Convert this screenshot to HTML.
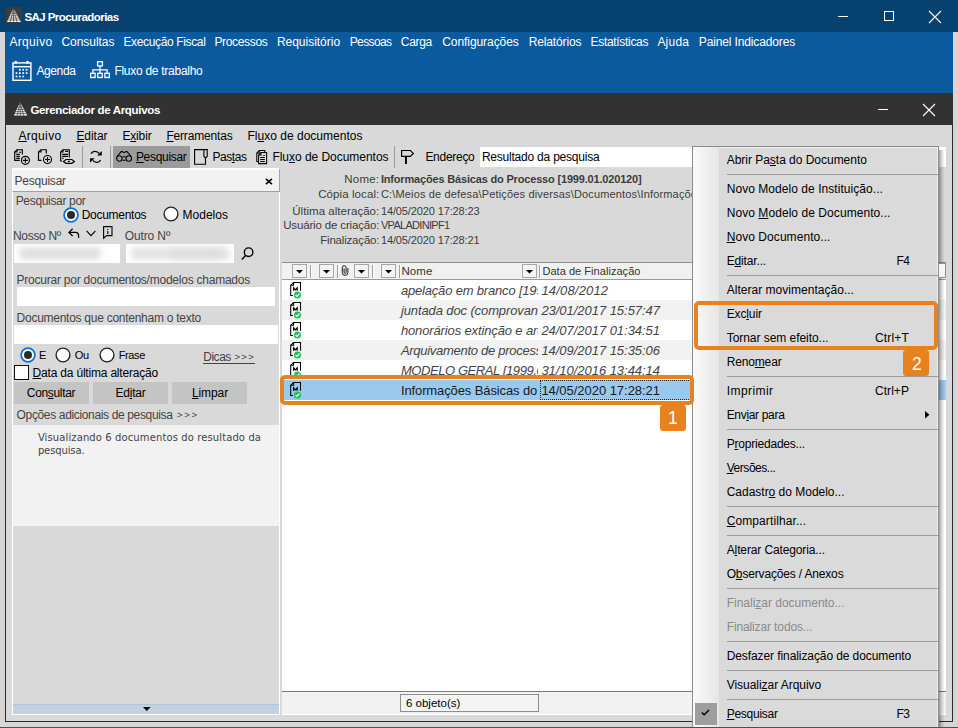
<!DOCTYPE html>
<html lang="pt-BR"><head><meta charset="utf-8"><title>SAJ Procuradorias</title>
<style>
html,body{margin:0;padding:0;}
body{width:958px;height:728px;overflow:hidden;position:relative;background:#d9d9d9;font-family:"Liberation Sans",sans-serif;}
.b{position:absolute;box-sizing:border-box;}
.t{position:absolute;white-space:nowrap;font-family:"Liberation Sans",sans-serif;}
svg{position:absolute;overflow:visible;}
u{text-decoration:underline;text-underline-offset:1px;text-decoration-thickness:1px;}
</style></head>
<body>
<div class="b" style="left:0px;top:0px;width:958px;height:32px;background:#07416f;"></div>
<div class="b" style="left:0px;top:32px;width:5px;height:696px;background:#d6d6d6;"></div>
<div class="b" style="left:953px;top:32px;width:5px;height:696px;background:#d6d6d6;"></div>
<div class="b" style="left:5px;top:32px;width:948px;height:61px;background:#0b5a9e;"></div>
<svg style="left:6px;top:7px" width="16" height="16" viewBox="0 0 16 16"><rect x="0" y="0" width="16" height="16" fill="#3c3c3c"/><path d="M7.3 1.2 L14.8 14.9 L1 14.9 Z" fill="#fff"/><path d="M4.4 8.8 L11.4 8.8 M3.2 11 L12.6 11 M2.1 13 L13.7 13 M5.6 6.4 L10 6.4 M7.3 1.2 L7.6 14.9 M7.3 1.2 L4.4 14.9 M7.3 1.2 L11 14.9" stroke="#444" stroke-width="0.75" fill="none"/></svg>
<span class="t" style="top:10.00px;font-size:11.5px;line-height:15px;color:#fff;font-weight:bold;left:24.40px;letter-spacing:-0.556px;">SAJ Procuradorias</span>
<svg style="left:830px;top:0px" width="128" height="32" viewBox="0 0 128 32"><path d="M8 16.5 H18" stroke="#fff" stroke-width="1"/><rect x="54.5" y="11.5" width="9" height="9" fill="none" stroke="#fff" stroke-width="1"/><path d="M99 11 L111 23 M111 11 L99 23" stroke="#fff" stroke-width="1.1"/></svg>
<span class="t" style="top:35.00px;font-size:12px;line-height:15px;color:#fff;left:9.40px;letter-spacing:0.345px;">Arquivo</span>
<span class="t" style="top:35.00px;font-size:12px;line-height:15px;color:#fff;left:61.40px;letter-spacing:-0.031px;">Consultas</span>
<span class="t" style="top:35.00px;font-size:12px;line-height:15px;color:#fff;left:123.40px;letter-spacing:-0.352px;">Execução Fiscal</span>
<span class="t" style="top:35.00px;font-size:12px;line-height:15px;color:#fff;left:214.40px;letter-spacing:-0.326px;">Processos</span>
<span class="t" style="top:35.00px;font-size:12px;line-height:15px;color:#fff;left:276.90px;letter-spacing:-0.015px;">Requisitório</span>
<span class="t" style="top:35.00px;font-size:12px;line-height:15px;color:#fff;left:349.70px;letter-spacing:-0.604px;">Pessoas</span>
<span class="t" style="top:35.00px;font-size:12px;line-height:15px;color:#fff;left:400.80px;letter-spacing:-0.297px;">Carga</span>
<span class="t" style="top:35.00px;font-size:12px;line-height:15px;color:#fff;left:442.20px;letter-spacing:-0.061px;">Configurações</span>
<span class="t" style="top:35.00px;font-size:12px;line-height:15px;color:#fff;left:528.80px;letter-spacing:-0.153px;">Relatórios</span>
<span class="t" style="top:35.00px;font-size:12px;line-height:15px;color:#fff;left:590.60px;letter-spacing:-0.322px;">Estatísticas</span>
<span class="t" style="top:35.00px;font-size:12px;line-height:15px;color:#fff;left:657.40px;letter-spacing:0.219px;">Ajuda</span>
<span class="t" style="top:35.00px;font-size:12px;line-height:15px;color:#fff;left:698.80px;letter-spacing:-0.135px;">Painel Indicadores</span>
<svg style="left:12px;top:60px" width="20" height="22" viewBox="0 0 20 22"><rect x="1" y="2.9" width="17.9" height="17.4" fill="none" stroke="#fff" stroke-width="1.4"/><path d="M1 6.7 H18.9" stroke="#fff" stroke-width="1.5"/><circle cx="3.8" cy="2.2" r="1.5" fill="#fff"/><circle cx="15.5" cy="2.2" r="1.5" fill="#fff"/><g fill="#fff"><rect x="6.95" y="8.95" width="1.7" height="1.7"/><rect x="10.35" y="8.95" width="1.7" height="1.7"/><rect x="13.75" y="8.95" width="1.7" height="1.7"/><rect x="3.65" y="12.25" width="1.7" height="1.7"/><rect x="6.95" y="12.25" width="1.7" height="1.7"/><rect x="10.35" y="12.25" width="1.7" height="1.7"/><rect x="13.75" y="12.25" width="1.7" height="1.7"/><rect x="3.65" y="15.65" width="1.7" height="1.7"/><rect x="6.95" y="15.65" width="1.7" height="1.7"/><rect x="10.35" y="15.65" width="1.7" height="1.7"/></g></svg>
<span class="t" style="top:64.00px;font-size:12px;line-height:15px;color:#fff;left:36.40px;letter-spacing:-0.379px;">Agenda</span>
<svg style="left:90px;top:61px" width="20" height="18" viewBox="0 0 20 18"><g fill="none" stroke="#fff" stroke-width="1.3"><rect x="7.6" y="0.7" width="4.8" height="4.2"/><rect x="0.7" y="12.3" width="4.4" height="4.2"/><rect x="7.8" y="12.3" width="4.4" height="4.2"/><rect x="14.9" y="12.3" width="4.4" height="4.2"/><path d="M10 5 V12.3 M2.9 12.3 V8.8 H17.1 V12.3"/></g></svg>
<span class="t" style="top:64.00px;font-size:12px;line-height:15px;color:#fff;left:114.40px;letter-spacing:-0.273px;">Fluxo de trabalho</span>
<div class="b" style="left:5px;top:93px;width:948px;height:32px;background:#323232;"></div>
<div class="b" style="left:5px;top:125px;width:1px;height:597px;background:#2b2b2b;"></div>
<div class="b" style="left:952px;top:125px;width:1px;height:597px;background:#2b2b2b;"></div>
<div class="b" style="left:5px;top:721px;width:948px;height:1px;background:#2b2b2b;"></div>
<div class="b" style="left:5px;top:722px;width:948px;height:5px;background:#d6d6d6;"></div>
<svg style="left:12.6px;top:100.6px" width="15.5" height="15.5" viewBox="0 0 16 16"><path d="M7.3 1.2 L14.8 14.9 L1 14.9 Z" fill="#fff"/><path d="M4.4 8.8 L11.4 8.8 M3.2 11 L12.6 11 M2.1 13 L13.7 13 M5.6 6.4 L10 6.4 M7.3 1.2 L7.6 14.9 M7.3 1.2 L4.4 14.9 M7.3 1.2 L11 14.9" stroke="#3a3a3a" stroke-width="0.75" fill="none"/></svg>
<span class="t" style="top:103.00px;font-size:11.5px;line-height:15px;color:#fff;font-weight:bold;left:30.40px;letter-spacing:-0.321px;">Gerenciador de Arquivos</span>
<svg style="left:870px;top:93px" width="80" height="32" viewBox="0 0 80 32"><path d="M8 16.5 H18" stroke="#fff" stroke-width="1"/><path d="M53 11 L65 23 M65 11 L53 23" stroke="#fff" stroke-width="1.1"/></svg>
<span class="t" style="top:129.00px;font-size:12px;line-height:15px;color:#000;left:18.40px;letter-spacing:0.342px;"><u>A</u>rquivo</span>
<span class="t" style="top:129.00px;font-size:12px;line-height:15px;color:#000;left:76.40px;letter-spacing:-0.043px;"><u>E</u>ditar</span>
<span class="t" style="top:129.00px;font-size:12px;line-height:15px;color:#000;left:122.40px;letter-spacing:-0.155px;">E<u>x</u>ibir</span>
<span class="t" style="top:129.00px;font-size:12px;line-height:15px;color:#000;left:166.40px;letter-spacing:-0.177px;"><u>F</u>erramentas</span>
<span class="t" style="top:129.00px;font-size:12px;line-height:15px;color:#000;left:247.40px;letter-spacing:0.018px;">Fl<u>u</u>xo de documentos</span>
<div class="b" style="left:113px;top:146px;width:77px;height:22px;background:#9b9b9b;"></div>
<div class="b" style="left:82px;top:146px;width:1px;height:22px;background:#9c9c9c;"></div>
<div class="b" style="left:110px;top:146px;width:1px;height:22px;background:#9c9c9c;"></div>
<div class="b" style="left:394px;top:146px;width:1px;height:22px;background:#9c9c9c;"></div>
<span class="t" style="top:150.00px;font-size:12px;line-height:15px;color:#000;left:135.90px;letter-spacing:-0.308px;"><u>P</u>esquisar</span>
<span class="t" style="top:150.00px;font-size:12px;line-height:15px;color:#000;left:212.40px;letter-spacing:-0.436px;">Pas<u>t</u>as</span>
<span class="t" style="top:150.00px;font-size:12px;line-height:15px;color:#000;left:272.40px;letter-spacing:-0.033px;">Flu<u>x</u>o de Documentos</span>
<span class="t" style="top:150.00px;font-size:12px;line-height:15px;color:#000;left:425.40px;letter-spacing:-0.284px;">Endereço</span>
<div class="b" style="left:480px;top:147px;width:466px;height:20px;background:#fff;"></div>
<span class="t" style="top:150.00px;font-size:12px;line-height:15px;color:#000;left:481.90px;letter-spacing:-0.214px;">Resultado da pesquisa</span>
<svg style="left:13px;top:148px" width="18" height="18" viewBox="0 0 18 18"><g fill="none" stroke="#000" stroke-width="1.15"><path d="M6.8 12.3 H1.7 V4 L4 1.7 H9.3 V6.5"/><path d="M4 1.7 V4 H1.7"/><path d="M6.3 4.4 H7.8 M3.3 6.3 H6.8 M3.3 8.4 H6.8 M3.3 10.3 H6.8"/><circle cx="12.4" cy="12.3" r="4"/><path d="M9.9 12.3 H14.9 M12.4 9.8 V14.8"/></g></svg>
<svg style="left:37px;top:148px" width="18" height="18" viewBox="0 0 18 18"><g fill="none" stroke="#000" stroke-width="1.15"><path d="M4.5 12.3 H1.5 V4 L4 1.7 H9.3 V5.5"/><path d="M4 1.7 V4 H1.5"/><circle cx="10.5" cy="11.5" r="4"/><path d="M8 11.5 H13 M10.5 9 V14"/></g></svg>
<svg style="left:59px;top:148px" width="18" height="18" viewBox="0 0 18 18"><g fill="none" stroke="#000" stroke-width="1.15"><path d="M3 13 H1.7 V4 L4 1.7 H10.3 V9.5"/><path d="M4 1.7 V4 H1.7"/><path d="M6.2 3.4 H9 M3.3 6.4 H9 M3.3 8.4 H9 M3.2 10.4 H4.5"/><path d="M4.4 13.4 L7 11.5 H12.8 L15.4 13.4 L12.8 15.3 H7 Z"/><path d="M9 13.4 H10.8" stroke-width="1.4"/></g></svg>
<svg style="left:89px;top:149px" width="14" height="15" viewBox="0 0 14 15"><g fill="none" stroke="#000" stroke-width="1.25"><path d="M2 4.8 C3.6 1.4 8.2 1.4 10.6 4.8"/><path d="M11.6 11 C10 14 6 14 3.8 11.4"/></g><path d="M12.8 2 V6.6 H8.2 Z" fill="#000"/><path d="M1 9.2 H5.7 L1 13.6 Z" fill="#000"/></svg>
<svg style="left:116px;top:150px" width="17" height="13" viewBox="0 0 17 13"><g fill="none" stroke="#000" stroke-width="1.1"><circle cx="3.4" cy="8.5" r="2.75"/><circle cx="12.8" cy="8.5" r="2.75"/><path d="M1.4 6 L5.2 1.6 H6.3 L8.1 2.7 L9.9 1.6 H11 L14.8 6"/><path d="M6.6 6.7 H9.6 M6.6 10.3 H9.6"/></g></svg>
<svg style="left:194px;top:149px" width="15" height="17" viewBox="0 0 15 17"><g fill="none" stroke="#000" stroke-width="1.1"><path d="M9.9 0.6 H0.6 V15.3 H11.5 V9"/><path d="M9.9 0.6 H13.2 V7.4 L11.5 9 L9.9 7.4 Z"/></g></svg>
<svg style="left:256px;top:150px" width="12" height="15" viewBox="0 0 12 15"><g fill="none" stroke="#000" stroke-width="1.05"><path d="M2.6 11.5 H0.8 V3 L3.2 0.5 H8.8 V2.4"/><path d="M3.2 0.8 V3 H1"/><path d="M2.6 13.6 V5 L5 2.4 H10.6 V13.6 Z"/><path d="M5 2.6 V5 H2.8"/><path d="M7.3 5.5 H8.8 M4.2 7.5 H8.8 M4.2 9.5 H8.8 M4.2 11.4 H8.8"/></g></svg>
<svg style="left:400px;top:149px" width="15" height="16" viewBox="0 0 15 16"><g fill="none" stroke="#000" stroke-width="1.15"><path d="M1.6 1.5 H10.3 L13.4 4.4 L10.3 7.4 H1.6 Z"/></g><rect x="5" y="7.4" width="1.9" height="7.6" fill="#000"/></svg>
<div class="b" style="left:12px;top:168px;width:268px;height:24px;background:#f2f2f2;border-top:2px solid #fff;border-left:1px solid #fff;border-right:1px solid #a2a2a2;border-bottom:1px solid #a2a2a2;"></div>
<div class="b" style="left:12px;top:192px;width:1px;height:523px;background:#fff;"></div>
<div class="b" style="left:279px;top:192px;width:1px;height:523px;background:#fff;"></div>
<div class="b" style="left:12px;top:714px;width:268px;height:1px;background:#fff;"></div>
<span class="t" style="top:174.00px;font-size:12px;line-height:15px;color:#444;left:14.40px;letter-spacing:-0.208px;">Pesquisar</span>
<svg style="left:264.5px;top:177.5px" width="8" height="7" viewBox="0 0 8 7"><path d="M0.9 0.8 L6.9 6.2 M6.9 0.8 L0.9 6.2" stroke="#111" stroke-width="1.8"/></svg>
<span class="t" style="top:194.00px;font-size:12px;line-height:15px;color:#444;left:15.70px;letter-spacing:-0.327px;">Pesquisar por</span>
<svg style="left:62.5px;top:206.7px" width="16" height="16"><circle cx="8" cy="8" r="6.9" fill="#fff" stroke="#0a72d1" stroke-width="1.7"/><circle cx="8" cy="8" r="4" fill="#2a2a2a"/></svg>
<span class="t" style="top:208.00px;font-size:12px;line-height:15px;color:#000;left:81.70px;letter-spacing:-0.277px;">Documentos</span>
<svg style="left:163.3px;top:206.4px" width="16" height="16"><circle cx="8" cy="8" r="6.9" fill="#fff" stroke="#222" stroke-width="1.4"/></svg>
<span class="t" style="top:208.00px;font-size:12px;line-height:15px;color:#000;left:182.40px;letter-spacing:0.049px;">Modelos</span>
<span class="t" style="top:229.00px;font-size:12px;line-height:15px;color:#444;left:13.00px;letter-spacing:-0.313px;">Nosso Nº</span>
<span class="t" style="top:229.00px;font-size:12px;line-height:15px;color:#444;left:124.70px;letter-spacing:-0.113px;">Outro Nº</span>
<svg style="left:67.5px;top:228px" width="12" height="11" viewBox="0 0 12 11"><g fill="none" stroke="#000" stroke-width="1.2"><path d="M4.6 0.8 L0.9 4.4 L4.6 8"/><path d="M1 4.4 H7.4 C9.6 4.4 10.6 6 10.6 8 V10"/></g></svg>
<svg style="left:85.5px;top:230px" width="10" height="7" viewBox="0 0 10 7"><path d="M0.6 0.8 L5 5.6 L9.4 0.8" fill="none" stroke="#000" stroke-width="1.1"/></svg>
<svg style="left:102.5px;top:226px" width="10" height="13" viewBox="0 0 10 13"><g fill="none" stroke="#000" stroke-width="1.1"><path d="M0.6 0.6 H9 V9.6 H3.6 L0.6 12.2 Z"/><path d="M4.8 3 V3.9 M4.8 5 V8"/></g></svg>
<div class="b" style="left:14px;top:244px;width:106px;height:19px;background:#fff;"></div>
<div class="b" style="left:126px;top:244px;width:108px;height:19px;background:#fff;"></div>
<div class="b" style="left:19px;top:247px;width:82px;height:13px;background:#e0e0e0;filter:blur(3px);border-radius:5px;"></div>
<div class="b" style="left:131px;top:247px;width:99px;height:13px;background:#e4e4e4;filter:blur(3px);border-radius:5px;"></div><div class="b" style="left:170px;top:250px;width:52px;height:7px;background:#dcdcdc;filter:blur(3px);border-radius:4px;"></div>
<svg style="left:241.3px;top:247.3px" width="13" height="13" viewBox="0 0 13 13"><g fill="none" stroke="#000" stroke-width="1.4"><circle cx="7.6" cy="5.2" r="4.3"/><path d="M4.6 8.4 L0.8 12.4"/></g></svg>
<span class="t" style="top:273.00px;font-size:12px;line-height:15px;color:#444;left:16.60px;letter-spacing:-0.235px;">Procurar por documentos/modelos chamados</span>
<div class="b" style="left:17px;top:287px;width:258px;height:19px;background:#fff;"></div>
<span class="t" style="top:311.00px;font-size:12px;line-height:15px;color:#444;left:16.60px;letter-spacing:-0.266px;">Documentos que contenham o texto</span>
<div class="b" style="left:14px;top:325px;width:264px;height:19px;background:#fff;"></div>
<svg style="left:19.5px;top:346.5px" width="16" height="16"><circle cx="8" cy="8" r="6.9" fill="#fff" stroke="#0a72d1" stroke-width="1.7"/><circle cx="8" cy="8" r="4" fill="#2a2a2a"/></svg>
<span class="t" style="top:348.00px;font-size:11px;line-height:14px;color:#000;left:39.10px;letter-spacing:-1.744px;">E</span>
<svg style="left:55.4px;top:346.5px" width="16" height="16"><circle cx="8" cy="8" r="6.9" fill="#fff" stroke="#222" stroke-width="1.4"/></svg>
<span class="t" style="top:348.00px;font-size:11px;line-height:14px;color:#000;left:74.80px;letter-spacing:-0.244px;">Ou</span>
<svg style="left:99.3px;top:346.5px" width="16" height="16"><circle cx="8" cy="8" r="6.9" fill="#fff" stroke="#222" stroke-width="1.4"/></svg>
<span class="t" style="top:348.00px;font-size:11px;line-height:14px;color:#000;left:118.70px;letter-spacing:-0.385px;">Frase</span>
<span class="t" style="top:350.00px;font-size:12px;line-height:15px;color:#444;left:203.20px;letter-spacing:-0.463px;">Dicas</span>
<span class="t" style="top:350.00px;font-size:9.5px;line-height:13px;color:#444;left:234.40px;letter-spacing:1.415px;">&gt;&gt;&gt;</span>
<div class="b" style="left:203px;top:363px;width:52px;height:1px;background:#444;"></div>
<div class="b" style="left:14px;top:365px;width:15px;height:15px;background:#fff;border:1px solid #111;"></div>
<span class="t" style="top:366.00px;font-size:12px;line-height:15px;color:#000;left:32.60px;letter-spacing:-0.195px;"><u>D</u>ata da última alteração</span>
<div class="b" style="left:14px;top:382px;width:75px;height:22px;background:#c4c4c4;"></div>
<div class="b" style="left:93px;top:382px;width:75px;height:22px;background:#c4c4c4;"></div>
<div class="b" style="left:172px;top:382px;width:75px;height:22px;background:#c4c4c4;"></div>
<span class="t" style="top:386.00px;font-size:12px;line-height:15px;color:#000;left:26.80px;letter-spacing:-0.329px;">Con<u>s</u>ultar</span>
<span class="t" style="top:386.00px;font-size:12px;line-height:15px;color:#000;left:115.40px;letter-spacing:-0.212px;">Ed<u>i</u>tar</span>
<span class="t" style="top:386.00px;font-size:12px;line-height:15px;color:#000;left:191.90px;letter-spacing:-0.084px;"><u>L</u>impar</span>
<span class="t" style="top:408.00px;font-size:12px;line-height:15px;color:#444;left:16.60px;letter-spacing:-0.352px;">Opções adicionais de pesquisa</span>
<span class="t" style="top:408.00px;font-size:9.5px;line-height:13px;color:#444;left:176.90px;letter-spacing:1.781px;">&gt;&gt;&gt;</span>
<div class="b" style="left:13px;top:425px;width:266px;height:101px;background:#f2f2f2;"></div>
<span class="t" style="top:431.00px;font-size:10px;line-height:13px;color:#444;font-family:'DejaVu Sans','Liberation Sans',sans-serif;left:37.90px;letter-spacing:0.110px;">Visualizando 6 documentos do resultado da</span>
<span class="t" style="top:444.00px;font-size:10px;line-height:13px;color:#444;font-family:'DejaVu Sans','Liberation Sans',sans-serif;left:37.90px;letter-spacing:-0.123px;">pesquisa.</span>
<div class="b" style="left:13px;top:704px;width:266px;height:10px;background:#c3d0dd;border-top:1px solid #a9c6e2;"></div>
<svg style="left:142.5px;top:707px" width="8" height="4" viewBox="0 0 8 4"><path d="M0 0 H7.6 L3.8 4 Z" fill="#000"/></svg>
<span class="t" style="top:172.00px;font-size:11.5px;line-height:15px;color:#3c3c3c;right:578.70px;letter-spacing:0.245px;">Nome:</span>
<span class="t" style="top:172.00px;font-size:11px;line-height:14px;color:#3c3c3c;font-weight:bold;left:380.90px;letter-spacing:-0.176px;">Informações Básicas do Processo [1999.01.020120]</span>
<span class="t" style="top:187.00px;font-size:11.5px;line-height:15px;color:#3c3c3c;right:578.70px;letter-spacing:0.084px;">Cópia local:</span>
<div class="b" style="left:380px;top:186px;width:312px;height:16px;overflow:hidden;">
<span class="t" style="top:1.00px;font-size:11px;line-height:14px;color:#3c3c3c;left:0.90px;letter-spacing:0.160px;">C:\Meios de defesa\Petições diversas\Documentos\Informações Básicas do Processo</span>
</div>
<span class="t" style="top:204.00px;font-size:11.5px;line-height:15px;color:#3c3c3c;right:578.70px;letter-spacing:0.047px;">Última alteração:</span>
<span class="t" style="top:204.00px;font-size:11px;line-height:14px;color:#3c3c3c;left:380.90px;letter-spacing:-0.123px;">14/05/2020 17:28:23</span>
<span class="t" style="top:218.00px;font-size:11.5px;line-height:15px;color:#3c3c3c;right:578.70px;letter-spacing:-0.157px;">Usuário de criação:</span>
<span class="t" style="top:218.00px;font-size:11px;line-height:14px;color:#3c3c3c;left:380.90px;letter-spacing:-0.686px;">VPALADINIPF1</span>
<span class="t" style="top:233.00px;font-size:11.5px;line-height:15px;color:#3c3c3c;right:578.70px;letter-spacing:-0.190px;">Finalização:</span>
<span class="t" style="top:233.00px;font-size:11px;line-height:14px;color:#3c3c3c;left:380.90px;letter-spacing:-0.123px;">14/05/2020 17:28:21</span>
<div class="b" style="left:282px;top:262px;width:664px;height:453px;background:#fff;"></div>
<div class="b" style="left:282px;top:262px;width:664px;height:18px;background:#f1f1f1;border-bottom:1px solid #9a9a9a;"></div>
<div class="b" style="left:282px;top:262px;width:664px;height:1px;background:#8f8f8f;"></div>
<div class="b" style="left:292px;top:264px;width:15px;height:14px;background:#f4f4f4;border:1px solid #a6a6a6;"></div>
<svg style="left:296px;top:269.5px" width="7" height="4" viewBox="0 0 7 4"><path d="M0 0 H7 L3.5 3.6 Z" fill="#000"/></svg>
<div class="b" style="left:319px;top:264px;width:15px;height:14px;background:#f4f4f4;border:1px solid #a6a6a6;"></div>
<svg style="left:323px;top:269.5px" width="7" height="4" viewBox="0 0 7 4"><path d="M0 0 H7 L3.5 3.6 Z" fill="#000"/></svg>
<div class="b" style="left:354px;top:264px;width:15px;height:14px;background:#f4f4f4;border:1px solid #a6a6a6;"></div>
<svg style="left:358px;top:269.5px" width="7" height="4" viewBox="0 0 7 4"><path d="M0 0 H7 L3.5 3.6 Z" fill="#000"/></svg>
<div class="b" style="left:381px;top:264px;width:15px;height:14px;background:#f4f4f4;border:1px solid #a6a6a6;"></div>
<svg style="left:385px;top:269.5px" width="7" height="4" viewBox="0 0 7 4"><path d="M0 0 H7 L3.5 3.6 Z" fill="#000"/></svg>
<div class="b" style="left:522px;top:264px;width:15px;height:14px;background:#f4f4f4;border:1px solid #a6a6a6;"></div>
<svg style="left:526px;top:269.5px" width="7" height="4" viewBox="0 0 7 4"><path d="M0 0 H7 L3.5 3.6 Z" fill="#000"/></svg>
<div class="b" style="left:309.5px;top:265px;width:1px;height:13px;background:#a0a0a0;"></div>
<div class="b" style="left:310.5px;top:265px;width:1px;height:13px;background:#fff;"></div>
<div class="b" style="left:336.5px;top:265px;width:1px;height:13px;background:#a0a0a0;"></div>
<div class="b" style="left:337.5px;top:265px;width:1px;height:13px;background:#fff;"></div>
<div class="b" style="left:371.5px;top:265px;width:1px;height:13px;background:#a0a0a0;"></div>
<div class="b" style="left:372.5px;top:265px;width:1px;height:13px;background:#fff;"></div>
<div class="b" style="left:398.5px;top:265px;width:1px;height:13px;background:#a0a0a0;"></div>
<div class="b" style="left:399.5px;top:265px;width:1px;height:13px;background:#fff;"></div>
<div class="b" style="left:539px;top:265px;width:1px;height:13px;background:#a0a0a0;"></div>
<div class="b" style="left:540px;top:265px;width:1px;height:13px;background:#fff;"></div>
<svg style="left:341px;top:265px" width="9" height="12" viewBox="0 0 9 12"><path d="M6.9 3 V7.6 A2.8 2.8 0 0 1 1.3 7.6 V2.6 A1.9 1.9 0 0 1 5.1 2.6 V7.4 A1 1 0 0 1 3.1 7.4 V3.4" fill="none" stroke="#111" stroke-width="0.95"/></svg>
<span class="t" style="top:264.00px;font-size:11.5px;line-height:15px;color:#333;left:401.40px;letter-spacing:0.103px;">Nome</span>
<span class="t" style="top:264.00px;font-size:11px;line-height:14px;color:#333;left:542.40px;letter-spacing:0.046px;">Data de Finalização</span>
<svg style="left:289px;top:281px" width="13" height="19" viewBox="0 0 13 19"><path d="M3.9 14.5 H1.7 V4.3 L4.6 1.4 H11.5 V9.7" fill="none" stroke="#000" stroke-width="1.05"/><path d="M4.6 1.4 V4.3 H1.7" fill="none" stroke="#000" stroke-width="1.05"/><path d="M4.6 9.7 V6.8 L6.4 8.8 L8.2 6.8 V9.7" fill="none" stroke="#000" stroke-width="1.25"/><circle cx="8.5" cy="14" r="3.55" fill="#1fc05c"/><path d="M6.6 13.9 L8 15.3 L10.5 12.6" fill="none" stroke="#fff" stroke-width="1.2"/></svg>
<div class="b" style="left:396px;top:280px;width:142px;height:20px;overflow:hidden;">
<span class="t" style="top:2.00px;font-size:13px;line-height:17px;color:#444;font-style:italic;left:4.90px;letter-spacing:-0.180px;">apelação em branco [1999.01.020120]</span>
</div>
<span class="t" style="top:282.00px;font-size:13px;line-height:17px;color:#444;font-style:italic;left:541.40px;letter-spacing:0.182px;">14/08/2012</span>
<div class="b" style="left:282px;top:300px;width:664px;height:20px;background:#f2f2f2;"></div>
<svg style="left:289px;top:301px" width="13" height="19" viewBox="0 0 13 19"><path d="M3.9 14.5 H1.7 V4.3 L4.6 1.4 H11.5 V9.7" fill="none" stroke="#000" stroke-width="1.05"/><path d="M4.6 1.4 V4.3 H1.7" fill="none" stroke="#000" stroke-width="1.05"/><path d="M4.6 9.7 V6.8 L6.4 8.8 L8.2 6.8 V9.7" fill="none" stroke="#000" stroke-width="1.25"/><circle cx="8.5" cy="14" r="3.55" fill="#1fc05c"/><path d="M6.6 13.9 L8 15.3 L10.5 12.6" fill="none" stroke="#fff" stroke-width="1.2"/></svg>
<div class="b" style="left:396px;top:300px;width:142px;height:20px;overflow:hidden;">
<span class="t" style="top:2.00px;font-size:13px;line-height:17px;color:#444;font-style:italic;left:4.90px;letter-spacing:-0.110px;">juntada doc (comprovante)</span>
</div>
<span class="t" style="top:302.00px;font-size:13px;line-height:17px;color:#444;font-style:italic;left:541.40px;letter-spacing:-0.036px;">23/01/2017 15:57:47</span>
<svg style="left:289px;top:321px" width="13" height="19" viewBox="0 0 13 19"><path d="M3.9 14.5 H1.7 V4.3 L4.6 1.4 H11.5 V9.7" fill="none" stroke="#000" stroke-width="1.05"/><path d="M4.6 1.4 V4.3 H1.7" fill="none" stroke="#000" stroke-width="1.05"/><path d="M4.6 9.7 V6.8 L6.4 8.8 L8.2 6.8 V9.7" fill="none" stroke="#000" stroke-width="1.25"/><circle cx="8.5" cy="14" r="3.55" fill="#1fc05c"/><path d="M6.6 13.9 L8 15.3 L10.5 12.6" fill="none" stroke="#fff" stroke-width="1.2"/></svg>
<div class="b" style="left:396px;top:320px;width:142px;height:20px;overflow:hidden;">
<span class="t" style="top:2.00px;font-size:13px;line-height:17px;color:#444;font-style:italic;left:4.90px;letter-spacing:-0.130px;">honorários extinção e arquivamento</span>
</div>
<span class="t" style="top:322.00px;font-size:13px;line-height:17px;color:#444;font-style:italic;left:541.40px;letter-spacing:-0.036px;">24/07/2017 01:34:51</span>
<div class="b" style="left:282px;top:340px;width:664px;height:20px;background:#f2f2f2;"></div>
<svg style="left:289px;top:341px" width="13" height="19" viewBox="0 0 13 19"><path d="M3.9 14.5 H1.7 V4.3 L4.6 1.4 H11.5 V9.7" fill="none" stroke="#000" stroke-width="1.05"/><path d="M4.6 1.4 V4.3 H1.7" fill="none" stroke="#000" stroke-width="1.05"/><path d="M4.6 9.7 V6.8 L6.4 8.8 L8.2 6.8 V9.7" fill="none" stroke="#000" stroke-width="1.25"/><circle cx="8.5" cy="14" r="3.55" fill="#1fc05c"/><path d="M6.6 13.9 L8 15.3 L10.5 12.6" fill="none" stroke="#fff" stroke-width="1.2"/></svg>
<div class="b" style="left:396px;top:340px;width:142px;height:20px;overflow:hidden;">
<span class="t" style="top:2.00px;font-size:13px;line-height:17px;color:#444;font-style:italic;left:4.90px;letter-spacing:-0.280px;">Arquivamento de processo</span>
</div>
<span class="t" style="top:342.00px;font-size:13px;line-height:17px;color:#444;font-style:italic;left:541.40px;letter-spacing:-0.036px;">14/09/2017 15:35:06</span>
<svg style="left:289px;top:361px" width="13" height="19" viewBox="0 0 13 19"><path d="M3.9 14.5 H1.7 V4.3 L4.6 1.4 H11.5 V9.7" fill="none" stroke="#000" stroke-width="1.05"/><path d="M4.6 1.4 V4.3 H1.7" fill="none" stroke="#000" stroke-width="1.05"/><path d="M4.6 9.7 V6.8 L6.4 8.8 L8.2 6.8 V9.7" fill="none" stroke="#000" stroke-width="1.25"/><circle cx="8.5" cy="14" r="3.55" fill="#1fc05c"/><path d="M6.6 13.9 L8 15.3 L10.5 12.6" fill="none" stroke="#fff" stroke-width="1.2"/></svg>
<div class="b" style="left:396px;top:360px;width:142px;height:20px;overflow:hidden;">
<span class="t" style="top:2.00px;font-size:13px;line-height:17px;color:#444;font-style:italic;left:4.90px;letter-spacing:-0.420px;">MODELO GERAL [1999.01.020120]</span>
</div>
<span class="t" style="top:362.00px;font-size:13px;line-height:17px;color:#444;font-style:italic;left:541.40px;letter-spacing:-0.036px;">31/10/2016 13:44:14</span>
<div class="b" style="left:282px;top:380px;width:408px;height:20px;background:#99c9ef;"></div>
<div class="b" style="left:939px;top:380px;width:7px;height:20px;background:#99c9ef;"></div>
<svg style="left:289px;top:381px" width="13" height="19" viewBox="0 0 13 19"><path d="M3.9 14.5 H1.7 V4.3 L4.6 1.4 H11.5 V9.7" fill="none" stroke="#000" stroke-width="1.05"/><path d="M4.6 1.4 V4.3 H1.7" fill="none" stroke="#000" stroke-width="1.05"/><path d="M4.6 9.7 V6.8 L6.4 8.8 L8.2 6.8 V9.7" fill="none" stroke="#000" stroke-width="1.25"/><circle cx="8.5" cy="14" r="3.55" fill="#1fc05c"/><path d="M6.6 13.9 L8 15.3 L10.5 12.6" fill="none" stroke="#fff" stroke-width="1.2"/></svg>
<div class="b" style="left:396px;top:380px;width:142px;height:20px;overflow:hidden;">
<span class="t" style="top:2.00px;font-size:13px;line-height:17px;color:#1a1a1a;left:4.90px;letter-spacing:-0.110px;">Informações Básicas do Processo</span>
</div>
<div class="b" style="left:540px;top:380px;width:153px;height:20px;border:1px dotted #222;"></div>
<span class="t" style="top:382.00px;font-size:13px;line-height:17px;color:#1a1a1a;left:541.40px;letter-spacing:-0.036px;">14/05/2020 17:28:21</span>
<div class="b" style="left:282px;top:691px;width:664px;height:1px;background:#7a7a7a;"></div>
<div class="b" style="left:282px;top:692px;width:664px;height:22px;background:#f2f2f2;"></div>
<div class="b" style="left:400px;top:694px;width:139px;height:18px;background:#f4f4f4;border:1px solid #8e8e8e;"></div>
<span class="t" style="top:696.00px;font-size:11.5px;line-height:15px;color:#000;left:405.90px;letter-spacing:0.023px;">6 objeto(s)</span>
<div class="b" style="left:939px;top:150px;width:5px;height:582px;background:linear-gradient(to right,rgba(0,0,0,0.38),rgba(0,0,0,0.16) 50%,rgba(0,0,0,0.03));"></div>
<div class="b" style="left:939px;top:263px;width:7px;height:15px;background:#f6f6f6;border:1px solid #8f8f8f;border-left:none;"></div>
<div class="b" style="left:692px;top:146px;width:247px;height:584px;background:#dadada;border:1px solid #8c8c8c;box-shadow:inset 0 0 0 1px #f0f0f0;"></div>
<div class="b" style="left:693px;top:147px;width:26px;height:582px;background:linear-gradient(to right,#fafafa,#e6e6e6);"></div>
<span class="t" style="top:153.00px;font-size:12px;line-height:15px;color:#000;left:726.70px;letter-spacing:-0.023px;">Abrir Pa<u>s</u>ta do Documento</span>
<div class="b" style="left:727px;top:174px;width:211px;height:1px;background:#9c9c9c;"></div>
<span class="t" style="top:182.00px;font-size:12px;line-height:15px;color:#000;left:726.70px;letter-spacing:0.053px;">Novo Modelo de Instituição...</span>
<span class="t" style="top:206.00px;font-size:12px;line-height:15px;color:#000;left:726.70px;letter-spacing:0.063px;">Novo <u>M</u>odelo de Documento...</span>
<span class="t" style="top:230.00px;font-size:12px;line-height:15px;color:#000;left:726.70px;letter-spacing:0.063px;"><u>N</u>ovo Documento...</span>
<span class="t" style="top:254.00px;font-size:12px;line-height:15px;color:#000;left:726.70px;letter-spacing:-0.158px;">E<u>d</u>itar...</span>
<span class="t" style="top:254.00px;font-size:12px;line-height:15px;color:#000;left:896.40px;letter-spacing:-0.458px;">F4</span>
<div class="b" style="left:727px;top:275px;width:211px;height:1px;background:#9c9c9c;"></div>
<span class="t" style="top:283.00px;font-size:12px;line-height:15px;color:#000;left:726.70px;letter-spacing:0.025px;">Alterar movimentação...</span>
<span class="t" style="top:307.00px;font-size:12px;line-height:15px;color:#000;left:726.70px;letter-spacing:-0.133px;">Exc<u>l</u>uir</span>
<span class="t" style="top:331.00px;font-size:12px;line-height:15px;color:#000;left:726.70px;letter-spacing:-0.046px;">Tornar sem efeito...</span>
<span class="t" style="top:331.00px;font-size:12px;line-height:15px;color:#000;left:875.00px;letter-spacing:0.167px;">Ctrl+T</span>
<span class="t" style="top:355.00px;font-size:12px;line-height:15px;color:#000;left:726.70px;letter-spacing:-0.154px;">Reno<u>m</u>ear</span>
<div class="b" style="left:727px;top:376px;width:211px;height:1px;background:#9c9c9c;"></div>
<span class="t" style="top:384.00px;font-size:12px;line-height:15px;color:#000;left:726.70px;letter-spacing:0.434px;">Imprimir</span>
<span class="t" style="top:384.00px;font-size:12px;line-height:15px;color:#000;left:875.00px;letter-spacing:0.052px;">Ctrl+P</span>
<span class="t" style="top:408.00px;font-size:12px;line-height:15px;color:#000;left:726.70px;letter-spacing:-0.326px;">Env<u>i</u>ar para</span>
<svg style="left:924.7px;top:411px" width="5" height="8" viewBox="0 0 5 8"><path d="M0 0 L4.4 3.8 L0 7.6 Z" fill="#000"/></svg>
<div class="b" style="left:727px;top:429px;width:211px;height:1px;background:#9c9c9c;"></div>
<span class="t" style="top:437.00px;font-size:12px;line-height:15px;color:#000;left:726.70px;letter-spacing:-0.207px;">P<u>r</u>opriedades...</span>
<span class="t" style="top:461.00px;font-size:12px;line-height:15px;color:#000;left:726.70px;letter-spacing:-0.457px;"><u>V</u>ersões...</span>
<span class="t" style="top:485.00px;font-size:12px;line-height:15px;color:#000;left:726.70px;letter-spacing:-0.014px;">Cadastr<u>o</u> do Modelo...</span>
<div class="b" style="left:727px;top:506px;width:211px;height:1px;background:#9c9c9c;"></div>
<span class="t" style="top:514.00px;font-size:12px;line-height:15px;color:#000;left:726.70px;letter-spacing:0.097px;"><u>C</u>ompartilhar...</span>
<div class="b" style="left:727px;top:535px;width:211px;height:1px;background:#9c9c9c;"></div>
<span class="t" style="top:543.00px;font-size:12px;line-height:15px;color:#000;left:726.70px;letter-spacing:-0.122px;">A<u>l</u>terar Categoria...</span>
<span class="t" style="top:567.00px;font-size:12px;line-height:15px;color:#000;left:726.70px;letter-spacing:-0.165px;">O<u>b</u>servações / Anexos</span>
<div class="b" style="left:727px;top:588px;width:211px;height:1px;background:#9c9c9c;"></div>
<span class="t" style="top:596.00px;font-size:12px;line-height:15px;color:#8a8a8a;left:726.70px;letter-spacing:-0.013px;">Finali<u>z</u>ar documento...</span>
<span class="t" style="top:620.00px;font-size:12px;line-height:15px;color:#8a8a8a;left:726.70px;letter-spacing:-0.125px;">Finalizar todos...</span>
<div class="b" style="left:727px;top:641px;width:211px;height:1px;background:#9c9c9c;"></div>
<span class="t" style="top:649.00px;font-size:12px;line-height:15px;color:#000;left:726.70px;letter-spacing:-0.089px;">Desfazer finalização de documento</span>
<div class="b" style="left:727px;top:670px;width:211px;height:1px;background:#9c9c9c;"></div>
<span class="t" style="top:678.00px;font-size:12px;line-height:15px;color:#000;left:726.70px;letter-spacing:-0.037px;">Visuali<u>z</u>ar Arquivo</span>
<div class="b" style="left:727px;top:699px;width:211px;height:1px;background:#9c9c9c;"></div>
<div class="b" style="left:695px;top:703px;width:22px;height:22px;background:#9e9e9e;"></div>
<svg style="left:701.2px;top:708.6px" width="9" height="7" viewBox="0 0 9 7"><path d="M0.8 3.4 L3.2 5.8 L8 1" fill="none" stroke="#000" stroke-width="1.4"/></svg>
<span class="t" style="top:707.00px;font-size:12px;line-height:15px;color:#000;left:726.70px;letter-spacing:-0.264px;"><u>P</u>esquisar</span>
<span class="t" style="top:707.00px;font-size:12px;line-height:15px;color:#000;left:896.40px;letter-spacing:-0.458px;">F3</span>
<div class="b" style="left:280px;top:375px;width:414px;height:30px;border:4px solid #e8821e;border-radius:5px;"></div>
<div class="b" style="left:660px;top:405px;width:26px;height:26px;background:#e8821e;border-radius:3px;"></div>
<span class="t" style="top:407.00px;font-size:17.5px;line-height:22px;color:#fff;left:668.00px;">1</span>
<div class="b" style="left:694px;top:301px;width:244px;height:49px;border:4px solid #e8821e;border-radius:5px;"></div>
<div class="b" style="left:903px;top:350px;width:26px;height:26px;background:#e8821e;border-radius:3px;"></div>
<span class="t" style="top:353.00px;font-size:17.5px;line-height:22px;color:#fff;left:911.90px;">2</span>
<div class="b" style="left:0px;top:727px;width:958px;height:1px;background:#4f4f4f;"></div>
</body></html>
